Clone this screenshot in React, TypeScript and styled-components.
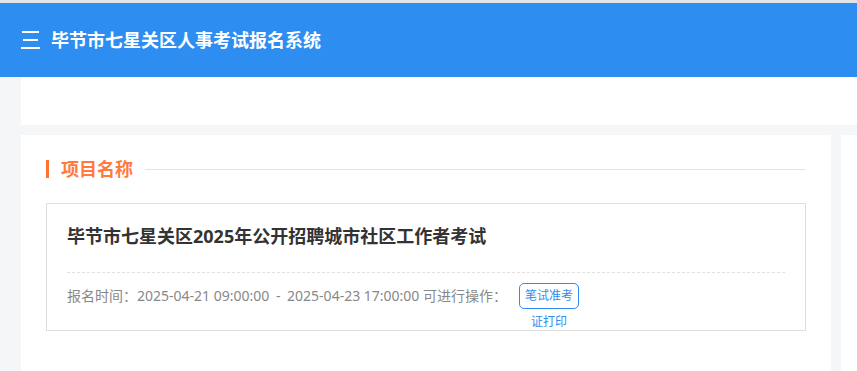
import React from "react";
import styled, { createGlobalStyle } from "styled-components";

const Global = createGlobalStyle`
  html, body { margin: 0; padding: 0; }
  body {
    background: #f5f6f8;
    font-family: "Noto Sans", "Noto Sans CJK SC", sans-serif;
    overflow: hidden;
  }
`;

const Page = styled.div`
  width: 857px;
  height: 371px;
  border-top: 3px solid #e2e4e8;
  box-sizing: border-box;
  overflow: hidden;
  display: flex;
  flex-direction: column;
`;

const Header = styled.header`
  height: 74px;
  flex: none;
  background: #2e8df0;
  display: flex;
  align-items: center;
  padding-left: 21px;
  gap: 11px;
`;

const Title = styled.h1`
  margin: 0;
  color: #fff;
  font-size: 18px;
  font-weight: 700;
  line-height: 1;
`;

const Body = styled.main`
  flex: 1;
  display: flex;
  flex-direction: column;
  padding-left: 21px;
  gap: 10px;
  min-height: 0;
`;

const TopBar = styled.div`
  height: 48px;
  background: #fff;
  flex: none;
`;

const Row = styled.div`
  flex: 1;
  display: flex;
  gap: 10px;
`;

const Card = styled.section<{ $w?: number }>`
  background: #fff;
  flex: ${(p) => (p.$w ? `0 0 ${p.$w}px` : "1")};
  box-sizing: border-box;
  padding: 25px 25px 0 25px;
`;

const SectionHead = styled.div`
  display: flex;
  align-items: center;
  height: 18px;
  margin-bottom: 25px;
`;

const Mark = styled.span`
  width: 3px;
  height: 18px;
  background: #ff7433;
  flex: none;
`;

const SectionTitle = styled.h2`
  margin: 0 12px 0 12px;
  font-size: 18px;
  font-weight: 700;
  color: #ff7a3c;
  line-height: 18px;
  white-space: nowrap;
`;

const Rule = styled.span`
  flex: 1;
  height: 1px;
  background: #e3e3e3;
`;

const Item = styled.div`
  border: 1px solid #dedede;
  padding: 0 20px;
  height: 128px;
  box-sizing: border-box;
`;

const ItemTitle = styled.h3`
  margin: 0;
  padding: 19px 0 0;
  height: 69px;
  box-sizing: border-box;
  border-bottom: 1px dashed #e0e0e0;
  font-size: 18px;
  font-weight: 700;
  color: #333;
  line-height: 26px;
`;

const Info = styled.div`
  display: flex;
  align-items: flex-start;
  padding-top: 10px;
  font-size: 14px;
  color: #888;
  line-height: 26px;
`;

const InfoText = styled.span`
  white-space: nowrap;
  margin-right: 12px;
`;

const Sep = styled.span`
  margin: 0 3px;
`;

const ActionBtn = styled.button`
  width: 60px;
  height: 26px;
  box-sizing: border-box;
  border: 1px solid #2e8df0;
  border-radius: 5px;
  background: #fff;
  color: #2e8df0;
  font-family: inherit;
  font-size: 12px;
  line-height: 26px;
  padding: 0 5px;
  text-align: center;
  overflow: visible;
  white-space: normal;
  word-break: break-all;
  display: block;
  flex: none;
`;

const BtnText = styled.span`
  display: block;
  position: relative;
  top: -1px;
`;

function MenuIcon() {
  return (
    <svg width="19" height="20" viewBox="0 0 19 20" aria-hidden="true">
      <rect x="1" y="1" width="17" height="2" fill="#fff" />
      <rect x="2" y="9" width="15" height="2" fill="#fff" />
      <rect x="0" y="17" width="19" height="2" fill="#fff" />
    </svg>
  );
}

export default function App() {
  return (
    <>
      <Global />
      <Page>
        <Header>
          <MenuIcon />
          <Title>毕节市七星关区人事考试报名系统</Title>
        </Header>
        <Body>
          <TopBar />
          <Row>
            <Card $w={810}>
              <SectionHead>
                <Mark />
                <SectionTitle>项目名称</SectionTitle>
                <Rule />
              </SectionHead>
              <Item>
                <ItemTitle>毕节市七星关区2025年公开招聘城市社区工作者考试</ItemTitle>
                <Info>
                  <InfoText>
                    报名时间：2025-04-21 09:00:00
                    <Sep> - </Sep>
                    2025-04-23 17:00:00 可进行操作：
                  </InfoText>
                  <ActionBtn type="button">
                    <BtnText>笔试准考证打印</BtnText>
                  </ActionBtn>
                </Info>
              </Item>
            </Card>
            <Card />
          </Row>
        </Body>
      </Page>
    </>
  );
}
